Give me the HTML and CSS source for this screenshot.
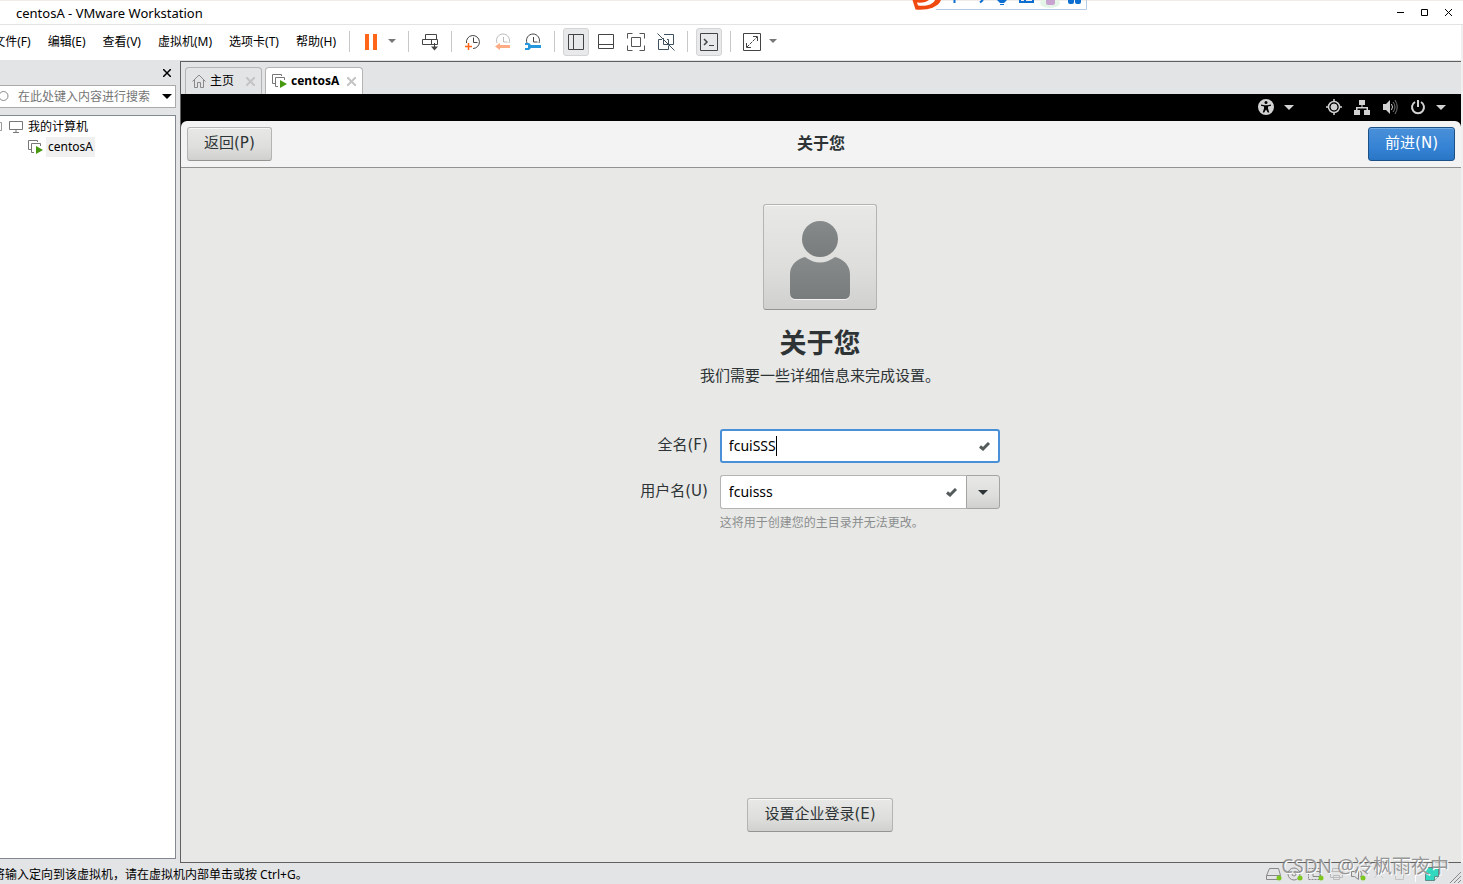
FILE: index.html
```html
<!DOCTYPE html>
<html lang="zh-CN">
<head>
<meta charset="utf-8">
<title>centosA - VMware Workstation</title>
<link rel="stylesheet" href="styles.css">
</head>
<body>
<div class="app">
  <header class="titlebar">
    <span class="title">centosA - VMware Workstation</span>
    <div class="winctl">
      <button aria-label="最小化"><svg width="10" height="10"><path d="M1 4.500h7" stroke="#000"/></svg></button>
      <button aria-label="最大化"><svg width="10" height="10"><path d="M1.500 1.500h6v6h-6z" stroke="#000" fill="none"/></svg></button>
      <button aria-label="关闭"><svg width="10" height="10"><path d="M1 1l7 7M8 1l-7 7" stroke="#000"/></svg></button>
    </div>
  </header>

  <div class="ime">
    <svg width="178" height="12" viewBox="0 0 178 12">
      <path d="M26 9.500H176.500V0" fill="none" stroke="#b5cbe6"/>
      <path d="M2.500 0L5.500 9.500C16 10.500 28 8 31 0Z" fill="#f04a11"/>
      <path d="M7 2.500C12 3 17 2 19 0H25C23 5 15 6.500 8 5.500Z" fill="#fff"/>
      <path d="M44.500 0V3M73 0L70 2.500" stroke="#0b6ed0" stroke-width="2"/>
      <path d="M87 0H97L94 3H90ZM90 4H94V5H90Z" fill="#0b6ed0"/>
      <path d="M110 0V2H123V0M115 0V2" stroke="#0b6ed0" stroke-width="2" fill="none"/>
      <ellipse cx="140" cy="3" rx="10" ry="5" fill="#e4f4e6"/>
      <rect x="136" y="-3" width="9" height="8" rx="2" fill="#c9a3cf"/>
      <rect x="158" y="-3" width="6" height="7" rx="2" fill="#0b6ed0"/><rect x="165" y="-3" width="6" height="7" rx="2" fill="#0b6ed0"/>
    </svg>
  </div>

  <div class="toolbar">
    <nav class="menu">
      <button>文件(F)</button><button>编辑(E)</button><button>查看(V)</button><button>虚拟机(M)</button><button>选项卡(T)</button><button>帮助(H)</button>
    </nav>
    <i class="sep"></i>
    <button class="tool" aria-label="暂停"><svg width="18" height="18"><path d="M3 1h4v16h-4zM11 1h4v16h-4z" fill="#ff661a"/></svg></button>
    <button class="drop" aria-label="电源选项"><svg width="8" height="5"><path d="M0 0h8L4 4z" fill="#777"/></svg></button>
    <i class="sep"></i>
    <button class="tool" aria-label="发送按键"><svg width="18" height="18" fill="none" stroke="#444"><path d="M4.500 1.500h11v5h-11zM1.500 6.500h15v5h-15zM10.500 6.500v5M13.500 10v6"/><path d="M10 13.500h7L13.500 17.500z" fill="#444" stroke="none"/></svg></button>
    <i class="sep"></i>
    <button class="tool" aria-label="拍摄快照"><svg width="18" height="18" fill="none" stroke="#444"><path d="M2.500 10A6.500 6.500 0 1 1 9 15.500M9.500 4.500v5h4"/><path d="M4.500 10v7M1 13.500h7" stroke="#ff661a" stroke-width="1.500"/></svg></button>
    <button class="tool" aria-label="恢复快照"><svg width="18" height="18" fill="none" stroke="#bbb"><path d="M3 10A6.500 6.500 0 1 1 15 10M9.500 4v5h4"/><path d="M1 13.500L6 10v2h10v3H6v2z" fill="#ffac85" stroke="none"/></svg></button>
    <button class="tool" aria-label="管理快照"><svg width="18" height="18" fill="none" stroke="#444"><path d="M3 10A6.500 6.500 0 1 1 15 10M9.500 4v5h4"/><path d="M1 10h4l2 2h10v3H7l-2 2H1v-2h3v-3H1z" fill="#2597dc" stroke="none"/></svg></button>
    <i class="sep"></i>
    <button class="tool on" aria-label="显示库"><svg width="18" height="18" fill="none" stroke="#444"><path d="M1.500 1.500h15v15h-15zM6.500 1.500v15"/></svg></button>
    <button class="tool" aria-label="缩略图栏"><svg width="18" height="18" fill="none" stroke="#444"><path d="M1.500 1.500h15v14h-15zM1.500 11.500h15"/></svg></button>
    <button class="tool" aria-label="全屏"><svg width="18" height="18" fill="none" stroke="#555"><path d="M.5 5.500v-5h5M12.500.5h5v5M17.500 12.500v5h-5M5.500 17.500h-5v-5M4.500 4.500h9v9h-9z"/></svg></button>
    <button class="tool" aria-label="Unity"><svg width="18" height="18" fill="none" stroke="#3f5060"><path d="M5 6.500H1.500v10h10v-4M7 1.500h9.500v10H12M6.500 5v6.500h5v-5H10M.5.5l17 17"/></svg></button>
    <i class="sep"></i>
    <button class="tool on" aria-label="控制台视图"><svg width="18" height="18" fill="none" stroke="#444"><path d="M.5.5h17v17H.5zM9 12.500h5"/><path d="M4 6l3 3-3 3" stroke-width="1.500"/></svg></button>
    <i class="sep"></i>
    <button class="tool" aria-label="拉伸"><svg width="18" height="18" fill="none" stroke="#444"><path d="M.5.5h17v17H.5zM10 3.500h4.500V8M3.500 10v4.500H8"/><path d="M4 14L14 4" stroke-dasharray="3 1"/></svg></button>
    <button class="drop" aria-label="拉伸选项"><svg width="8" height="5"><path d="M0 0h8L4 4z" fill="#777"/></svg></button>
  </div>

  <div class="work">
    <aside class="side">
      <div class="sidehead"><button aria-label="关闭库"><svg width="8" height="8"><path d="M0 0l8 8M8 0l-8 8" stroke="#000" stroke-width="1.500"/></svg></button></div>
      <div class="search">
        <svg width="10" height="14" fill="none" stroke="#888"><circle cx="3.500" cy="6" r="4.500"/></svg>
        <input type="text" aria-label="搜索" placeholder="在此处键入内容进行搜索">
        <button aria-label="搜索选项"><svg width="10" height="5"><path d="M0 0h10L5 5z"/></svg></button>
      </div>
      <div class="tree">
        <div class="node"><svg class="twist" width="2" height="10"><path d="M0 .5h1.500v8H0" fill="none" stroke="#999"/></svg><svg width="14" height="12" fill="none" stroke="#777"><path d="M.5.5h13v8H.5zM7 9v2M4 11.500h6"/></svg><span>我的计算机</span></div>
        <div class="node child"><svg width="15" height="14" fill="none" stroke="#777"><path d="M3 9.500H.5v-9h9V2M6 12.500H3.500v-9h9V6"/><path d="M8 6l7 4-7 4z" fill="#46980f" stroke="none"/></svg><span class="sel">centosA</span></div>
      </div>
    </aside>

    <main class="pane">
      <div class="tabs">
        <div class="tab"><svg width="14" height="14" fill="none" stroke="#888"><path d="M.5 7.500L7 1l6.500 6.500M2.500 6v7.500h3v-5h3v5h3V6"/></svg><span>主页</span><button aria-label="关闭主页"><svg width="9" height="9"><path d="M0 0l9 9M9 0l-9 9" stroke="#c4c4c4" stroke-width="2"/></svg></button></div>
        <div class="tab active"><svg width="15" height="14" fill="none" stroke="#777"><path d="M3 9.500H.5v-9h9V2M6 12.500H3.500v-9h9V6"/><path d="M8 6l7 4-7 4z" fill="#46980f" stroke="none"/></svg><span>centosA</span><button aria-label="关闭 centosA"><svg width="9" height="9"><path d="M0 0l9 9M9 0l-9 9" stroke="#c4c4c4" stroke-width="2"/></svg></button></div>
      </div>

      <section class="vm">
        <div class="topbar">
          <div class="sys">
            <svg width="16" height="16"><circle cx="8" cy="8" r="8" fill="#d2d2d2"/><circle cx="8" cy="3.500" r="1.500"/><path d="M3 5.500l3.500.7h3L13 5.500v1.300l-3 .8v2l1.300 4h-1.500L8 10.500l-1.800 3.100H4.700l1.300-4v-2l-3-.8z"/></svg>
            <svg width="10" height="5"><path d="M0 0h10L5 5z" fill="#d2d2d2"/></svg>
          </div>
          <div class="sys tray">
            <svg width="16" height="16" fill="none" stroke="#d2d2d2"><circle cx="8" cy="8" r="5.500" stroke-width="1.500"/><circle cx="8" cy="8" r="3" fill="#d2d2d2"/><path d="M8 0v3M8 13v3M0 8h3M13 8h3" stroke-width="1.500"/></svg>
            <svg width="16" height="16" fill="#d2d2d2"><path d="M5 1h6v5H8.500v2H14v3h2v5h-6v-5h2.500V9.500h-9V11H6v5H0v-5h2V8h5.500V6H5z"/></svg>
            <svg width="16" height="16" fill="none" stroke="#777"><path d="M1 5h3l4-4v14l-4-4H1z" fill="#d2d2d2" stroke="none"/><path d="M9.500 5q2 3 0 6" stroke="#d2d2d2"/><path d="M11 3q4 5 0 10M13 1q4.500 7 0 14"/></svg>
            <svg width="16" height="16" fill="none" stroke="#d2d2d2" stroke-width="2"><path d="M5 3A6 6 0 1 0 11 3M8 1v7"/></svg>
            <svg class="caret" width="10" height="5"><path d="M0 0h10L5 5z" fill="#d2d2d2"/></svg>
          </div>
        </div>
        <div class="headwrap"><header class="gtkhead">
          <button class="btn">返回(P)</button>
          <h2>关于您</h2>
          <button class="btn primary">前进(N)</button>
        </header></div>

        <div class="content">
          <button class="avatar" aria-label="头像"><svg width="60" height="80" viewBox="0 0 60 80"><defs><linearGradient id="g" x2="0" y2="1"><stop offset="0" stop-color="#868a8a"/><stop offset="1" stop-color="#787c7c"/></linearGradient></defs><path d="M0 74V54C0 46 6 39 15 37Q30 48 45 37C54 39 60 46 60 54V73Q60 79 54 79H6Q0 79 0 73Z" fill="#f2f2f2" transform="translate(0 1)"/><circle cx="30" cy="19" r="18" fill="url(#g)"/><path d="M0 73V54C0 46 6 39 15 37Q30 48 45 37C54 39 60 46 60 54V73Q60 79 54 79H6Q0 79 0 73Z" fill="url(#g)"/></svg></button>
          <h1>关于您</h1>
          <p class="lead">我们需要一些详细信息来完成设置。</p>
          <form class="form">
            <label for="full">全名(F)</label>
            <div class="field focus"><input id="full" type="text" value="fcuiSSS"><i class="cursor"></i><svg class="check" width="11" height="9"><path d="M1 4.500l3 2.500L10 1" fill="none" stroke="#555a5a" stroke-width="3"/></svg></div>
            <label for="user">用户名(U)</label>
            <div class="combo">
              <div class="field"><input id="user" type="text" value="fcuisss"><svg class="check" width="11" height="9"><path d="M1 4.500l3 2.500L10 1" fill="none" stroke="#555a5a" stroke-width="3"/></svg></div>
              <button type="button" class="arrow" aria-label="选择用户名"><svg width="10" height="5"><path d="M0 0h10L5 5z" fill="#2e3436"/></svg></button>
            </div>
            <p class="hint">这将用于创建您的主目录并无法更改。</p>
          </form>
          <button class="btn ent">设置企业登录(E)</button>
        </div>
      </section>
    </main>
  </div>

  <footer class="status">
    <span class="msg">将输入定向到该虚拟机，请在虚拟机内部单击或按 Ctrl+G。</span>
    <div class="devices">
      <svg width="16" height="14" fill="none" stroke="#888"><path d="M3.500 1.500h9l2 7v4H.5v-4zM.5 8.500h14"/><circle cx="13" cy="11" r="2.500" fill="#7cc61d" stroke="none"/></svg>
      <svg width="16" height="14" fill="none" stroke="#888"><circle cx="7" cy="7" r="6"/><circle cx="7" cy="7" r="2"/><circle cx="13" cy="11" r="2.500" fill="#7cc61d" stroke="none"/></svg>
      <svg width="16" height="14" fill="none" stroke="#888"><path d="M.5 1.500h12v11H.5z" stroke-dasharray="2 1"/><path d="M5 4.500h7v5H5z"/><circle cx="13" cy="11" r="2.500" fill="#7cc61d" stroke="none"/></svg>
      <svg width="16" height="14" fill="none" stroke="#bbb"><path d="M3.500 4.500v-3h8v3M1.500 4.500h12v6h-12zM4.500 8.500h6v4h-6z"/></svg>
      <svg width="16" height="14" fill="none" stroke="#888"><path d="M1.500 4.500h3l4-3v11l-4-3h-3zM10.500 4q3 3 0 6"/><circle cx="13" cy="11" r="2.500" fill="#7cc61d" stroke="none"/></svg>
      <svg width="16" height="14" fill="none" stroke="#ccc"><path d="M3 3l4 4-4 4M12 3L8 7l4 4"/></svg>
      <svg width="16" height="14" fill="none" stroke="#c4c4c4"><path d="M3.500 3.500h8v9h-8zM5.500.5h4v3"/></svg>
    </div>
    <i class="bar"></i>
    <svg width="16" height="14"><path d="M1.500.5h13v9l-4 4h-9z" fill="#30d8c0" stroke="#5a8c88"/><path d="M10.500 13.500v-4h4" fill="#d0f4ee" stroke="#5a8c88"/></svg>
    <svg class="grip" width="12" height="12" stroke="#888"><path d="M1 12L12 1M5 12l7-7M9 12l3-3"/></svg>
  </footer>
  <div class="mark">CSDN @冷枫雨夜中</div>
</div>
</body>
</html>
```
FILE: styles.css
```css
* { box-sizing: border-box; }
html, body { height: 100%; margin: 0; }
body { font: 12px/16px "Noto Sans", "Noto Sans CJK SC", sans-serif; color: #000; background: #f0f0f0; overflow: hidden; }
button, input { font: inherit; color: inherit; margin: 0; padding: 0; border: 0; background: none; outline: 0; }
button { display: flex; align-items: center; justify-content: center; white-space: nowrap; }
svg { display: block; flex: none; }
h1, h2, p { margin: 0; }

.app { position: relative; height: 100%; display: flex; flex-direction: column; overflow: hidden; }
.titlebar { flex: none; height: 25px; padding: 1px 9px 0 16px; display: flex; align-items: center; justify-content: space-between; background: #fff; border-top: 1px solid #f0ecea; border-bottom: 1px solid #e3e3e3; }
.title { font-size: 13px; }
.winctl { display: flex; gap: 14px; }
.ime { position: absolute; top: 0; left: 910px; }

.toolbar { flex: none; height: 36px; margin-right: 2px; padding-bottom: 2px; display: flex; align-items: center; background: #fff; border-bottom: 1px solid #e3e3e3; }
.menu { flex: none; width: 341px; padding-right: 1px; display: flex; justify-content: flex-end; gap: 9px; }
.menu button { padding: 0 4px; }
.sep { flex: none; width: 1px; height: 21px; margin: 0 8px; background: #c8c8c8; }
.tool { flex: none; width: 26px; height: 28px; border-radius: 3px; }
.tool + .tool { margin-left: 4px; }
.on { background: #e8e9ea; border: 1px solid #d4d4d4; }
.drop { width: 16px; height: 28px; }

.work { flex: 1; min-height: 0; display: flex; margin-right: 2px; background: #e3e4e6; }
.side { flex: none; width: 180px; padding: 0 4px 4px 0; display: flex; flex-direction: column; }
.sidehead { height: 24px; padding: 0 5px; display: flex; justify-content: flex-end; align-items: center; }
.search { height: 23px; padding-right: 3px; display: flex; align-items: center; background: #fff; border: 1px solid #aaa; border-left: 0; }
.search input { flex: 1; min-width: 0; margin-left: 8px; }
.search input::placeholder { color: #757575; opacity: 1; }
.tree { flex: 1; margin-top: 7px; padding-top: 1px; background: #fff; border: 1px solid #828790; border-left: 0; }
.node { height: 20px; display: flex; align-items: center; gap: 5px; }
.twist { margin-right: 2px; }
.child { padding-left: 28px; gap: 3px; }
.sel { padding: 2px; background: #f0f0f0; }

.pane { flex: 1; min-width: 0; display: flex; flex-direction: column; border: solid #606060; border-width: 1px 0 1px 1px; }
.tabs { flex: none; height: 32px; padding: 5px 4px 0; display: flex; gap: 3px; }
.tab { display: flex; align-items: center; padding: 0 6px; gap: 4px; border: 1px solid #b4b4b4; border-bottom: 0; border-radius: 4px 4px 0 0; }
.tab button { margin-left: 8px; }
.active { background: #fff; font-weight: 700; }
.active button { margin-left: 4px; }

.vm { flex: 1; min-height: 0; display: flex; flex-direction: column; background: #e8e8e6; color: #2e3436; font-family: "DejaVu Sans", "Noto Sans CJK SC", sans-serif; font-size: 15px; line-height: 20px; }
.topbar { flex: none; height: 27px; padding: 0 15px 1px 0; display: flex; justify-content: flex-end; align-items: center; gap: 32px; background: #000; }
.sys { display: flex; align-items: center; gap: 10px; }
.tray { gap: 12px; }
.tray .caret { margin-left: -2px; }
.headwrap { flex: none; background: #000; }
.gtkhead { height: 47px; padding: 0 6px; display: grid; grid-template-columns: 1fr auto 1fr; align-items: center; background: #f3f3f3; border-bottom: 1px solid #919190; border-radius: 6px 6px 0 0; }
.gtkhead h2 { font-size: 16px; line-height: 20px; }
.btn { height: 34px; padding: 0 16px 2px; border: 1px solid #b4b4b2; border-bottom-color: #949492; border-radius: 3px; background: linear-gradient(#e8e8e6, #dededc 60%, #d0d0ce); box-shadow: inset 0 1px #f8f8f8; }
.gtkhead .btn { justify-self: start; }
.gtkhead .primary { justify-self: end; color: #fff; border-color: #1c5187; background: linear-gradient(#4a90d9, #3583d5 60%, #2a76c6); box-shadow: inset 0 1px #75ace3; }
.content { flex: 1; min-height: 0; padding: 36px 2px 30px 0; display: flex; flex-direction: column; align-items: center; }
.avatar { flex: none; width: 114px; height: 106px; padding-top: 6px; border: 1px solid #b4b4b2; border-bottom-color: #949492; border-radius: 3px; background: linear-gradient(#e8e8e6, #dededc 60%, #d0d0ce); box-shadow: inset 0 1px #f8f8f8; }
h1 { margin-top: 16px; font-size: 27px; line-height: 36px; }
.lead { margin-top: 4px; }
.form { margin-top: 43px; display: grid; grid-template-columns: auto 280px; column-gap: 12px; row-gap: 12px; align-items: center; }
.form label { text-align: right; padding-bottom: 2px; }
.field { flex: 1; min-width: 0; height: 34px; padding: 0 9px 0 8px; display: flex; align-items: center; background: #fff; border: 1px solid #b4b4b2; border-radius: 3px; color: #000; font-family: "Noto Sans", sans-serif; font-size: 14px; }
.field input { field-sizing: content; min-width: 0; }
.focus { padding: 0 8px 0 7px; border: 2px solid #4a90d9; }
.cursor { width: 1px; height: 20px; background: #000; }
.check { margin-left: auto; }
.combo { display: flex; }
.combo .field { border-right: 0; border-radius: 3px 0 0 3px; }
.arrow { width: 34px; height: 34px; border: 1px solid #a4a4a2; border-radius: 0 3px 3px 0; background: linear-gradient(#e8e8e6, #dededc 60%, #d0d0ce); }
.hint { grid-column: 2; margin-top: -8px; font-size: 12px; line-height: 20px; color: #8b8e8f; }
.ent { flex: none; margin-top: auto; }

.status { flex: none; height: 21px; padding-right: 2px; display: flex; align-items: center; background: #e3e4e6; }
.msg { margin: 2px auto 0 -7px; white-space: nowrap; }
.devices { display: flex; gap: 5px; }
.bar { width: 1px; height: 16px; margin: 0 8px 0 7px; background: #fff; }
.grip { margin: 6px 0 0 9px; }
.mark { position: absolute; right: 14px; bottom: 5px; font-size: 19px; line-height: 26px; color: rgba(120, 120, 120, .75); text-shadow: 1px 1px #fff; }
```
